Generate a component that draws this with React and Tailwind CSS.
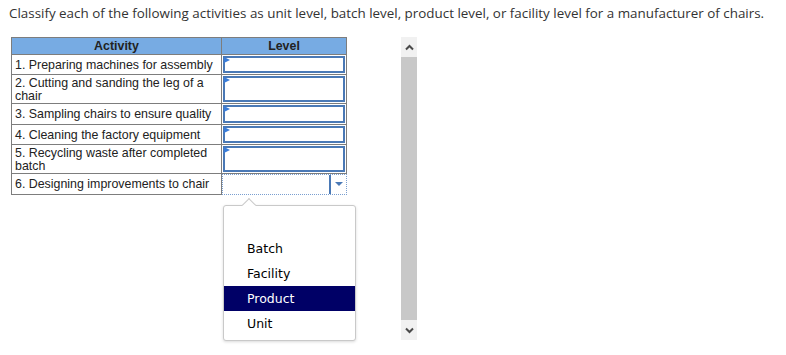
import React from "react";

const rows = [
  { text: "1. Preparing machines for assembly", h: "h-[20px]" },
  { text: "2. Cutting and sanding the leg of a chair", h: "h-[29px]" },
  { text: "3. Sampling chairs to ensure quality", h: "h-[21px]" },
  { text: "4. Cleaning the factory equipment", h: "h-[20px]" },
  { text: "5. Recycling waste after completed batch", h: "h-[29px]" },
];

const options = ["Batch", "Facility", "Product", "Unit"];

function Flag() {
  return (
    <svg className="absolute left-[-1px] top-[-1px]" width="6" height="7" viewBox="0 0 6 7">
      <path d="M0 0 L6 3 L0 6 Z" fill="#3b7dd8" />
    </svg>
  );
}

export default function App() {
  return (
    <div className="relative h-[355px] w-[786px] overflow-hidden bg-white font-['Liberation_Sans',Arial,sans-serif] text-[#333]">
      <p className="whitespace-nowrap pl-[9px] pt-[4px] font-['Open_Sans',sans-serif] text-[13.4px] leading-[18px] text-[#333]">
        Classify each of the following activities as unit level, batch level, product level, or facility level for a manufacturer of chairs.
      </p>

      <div className="flex items-start">
        <div className="ml-[11px] mt-[15px] w-[336px] text-[12.4px] leading-[13px] text-[#222]">
          <div className="flex h-[18px] border border-[#7d7d7d] bg-[#77abe3] font-bold">
            <div className="flex w-[210px] items-center justify-center border-r border-[#7d7d7d]">Activity</div>
            <div className="flex flex-1 items-center justify-center">Level</div>
          </div>
          {rows.map((r) => (
            <div key={r.text} className={`flex border-x border-b border-[#7d7d7d] ${r.h}`}>
              <div className="flex w-[210px] items-center border-r border-[#7d7d7d] px-[3px] pt-[1px]">
                {r.text}
              </div>
              <div className="flex-1 p-[1px]">
                <div className="relative h-full border-2 border-[#4a79b6] bg-white">
                  <Flag />
                </div>
              </div>
            </div>
          ))}
          <div className="flex h-[21px]">
            <div className="flex w-[211px] items-center border-x border-b border-[#7d7d7d] px-[3px] pt-[1px]">
              6. Designing improvements to chair
            </div>
            <div className="flex flex-1 border border-dotted border-[#7a9fd0]">
              <div className="flex-1" />
              <div className="flex w-[17px] items-center justify-center border-l-2 border-[#4a79b6]">
                <svg width="8" height="5" viewBox="0 0 8 5">
                  <path d="M0 0 L8 0 L4 4 Z" fill="#4a79b6" />
                </svg>
              </div>
            </div>
          </div>
        </div>

        <div className="ml-[54px] mt-[15px] flex h-[303px] w-[16px] flex-col bg-[#c8c8c8]">
          <div className="flex h-[20px] items-center justify-center bg-[#f1f1f1]">
            <svg width="9" height="7" viewBox="0 0 9 7">
              <path d="M1 5.5 L4.5 2 L8 5.5" stroke="#4a4a4a" strokeWidth="2" fill="none" />
            </svg>
          </div>
          <div className="flex-1" />
          <div className="flex h-[20px] items-center justify-center bg-[#f1f1f1]">
            <svg width="9" height="7" viewBox="0 0 9 7">
              <path d="M1 1.5 L4.5 5 L8 1.5" stroke="#4a4a4a" strokeWidth="2" fill="none" />
            </svg>
          </div>
        </div>
      </div>

      <div className="absolute left-[223px] top-[205px] w-[133px] rounded-[3px] border border-[#c9c9c9] bg-white pb-[4px] pt-[30px] font-['DejaVu_Sans',Verdana,sans-serif] text-[12.5px] text-black shadow-[0_1px_3px_rgba(0,0,0,0.15)]">
        <div className="absolute left-[20px] top-[-6px] h-[10px] w-[10px] rotate-45 border-l border-t border-[#c9c9c9] bg-white" />
        {options.map((o) => (
          <div
            key={o}
            className={`h-[25px] pl-[23px] leading-[25px] ${o === "Product" ? "bg-[#000066] text-white" : ""}`}
          >
            {o}
          </div>
        ))}
      </div>
    </div>
  );
}
